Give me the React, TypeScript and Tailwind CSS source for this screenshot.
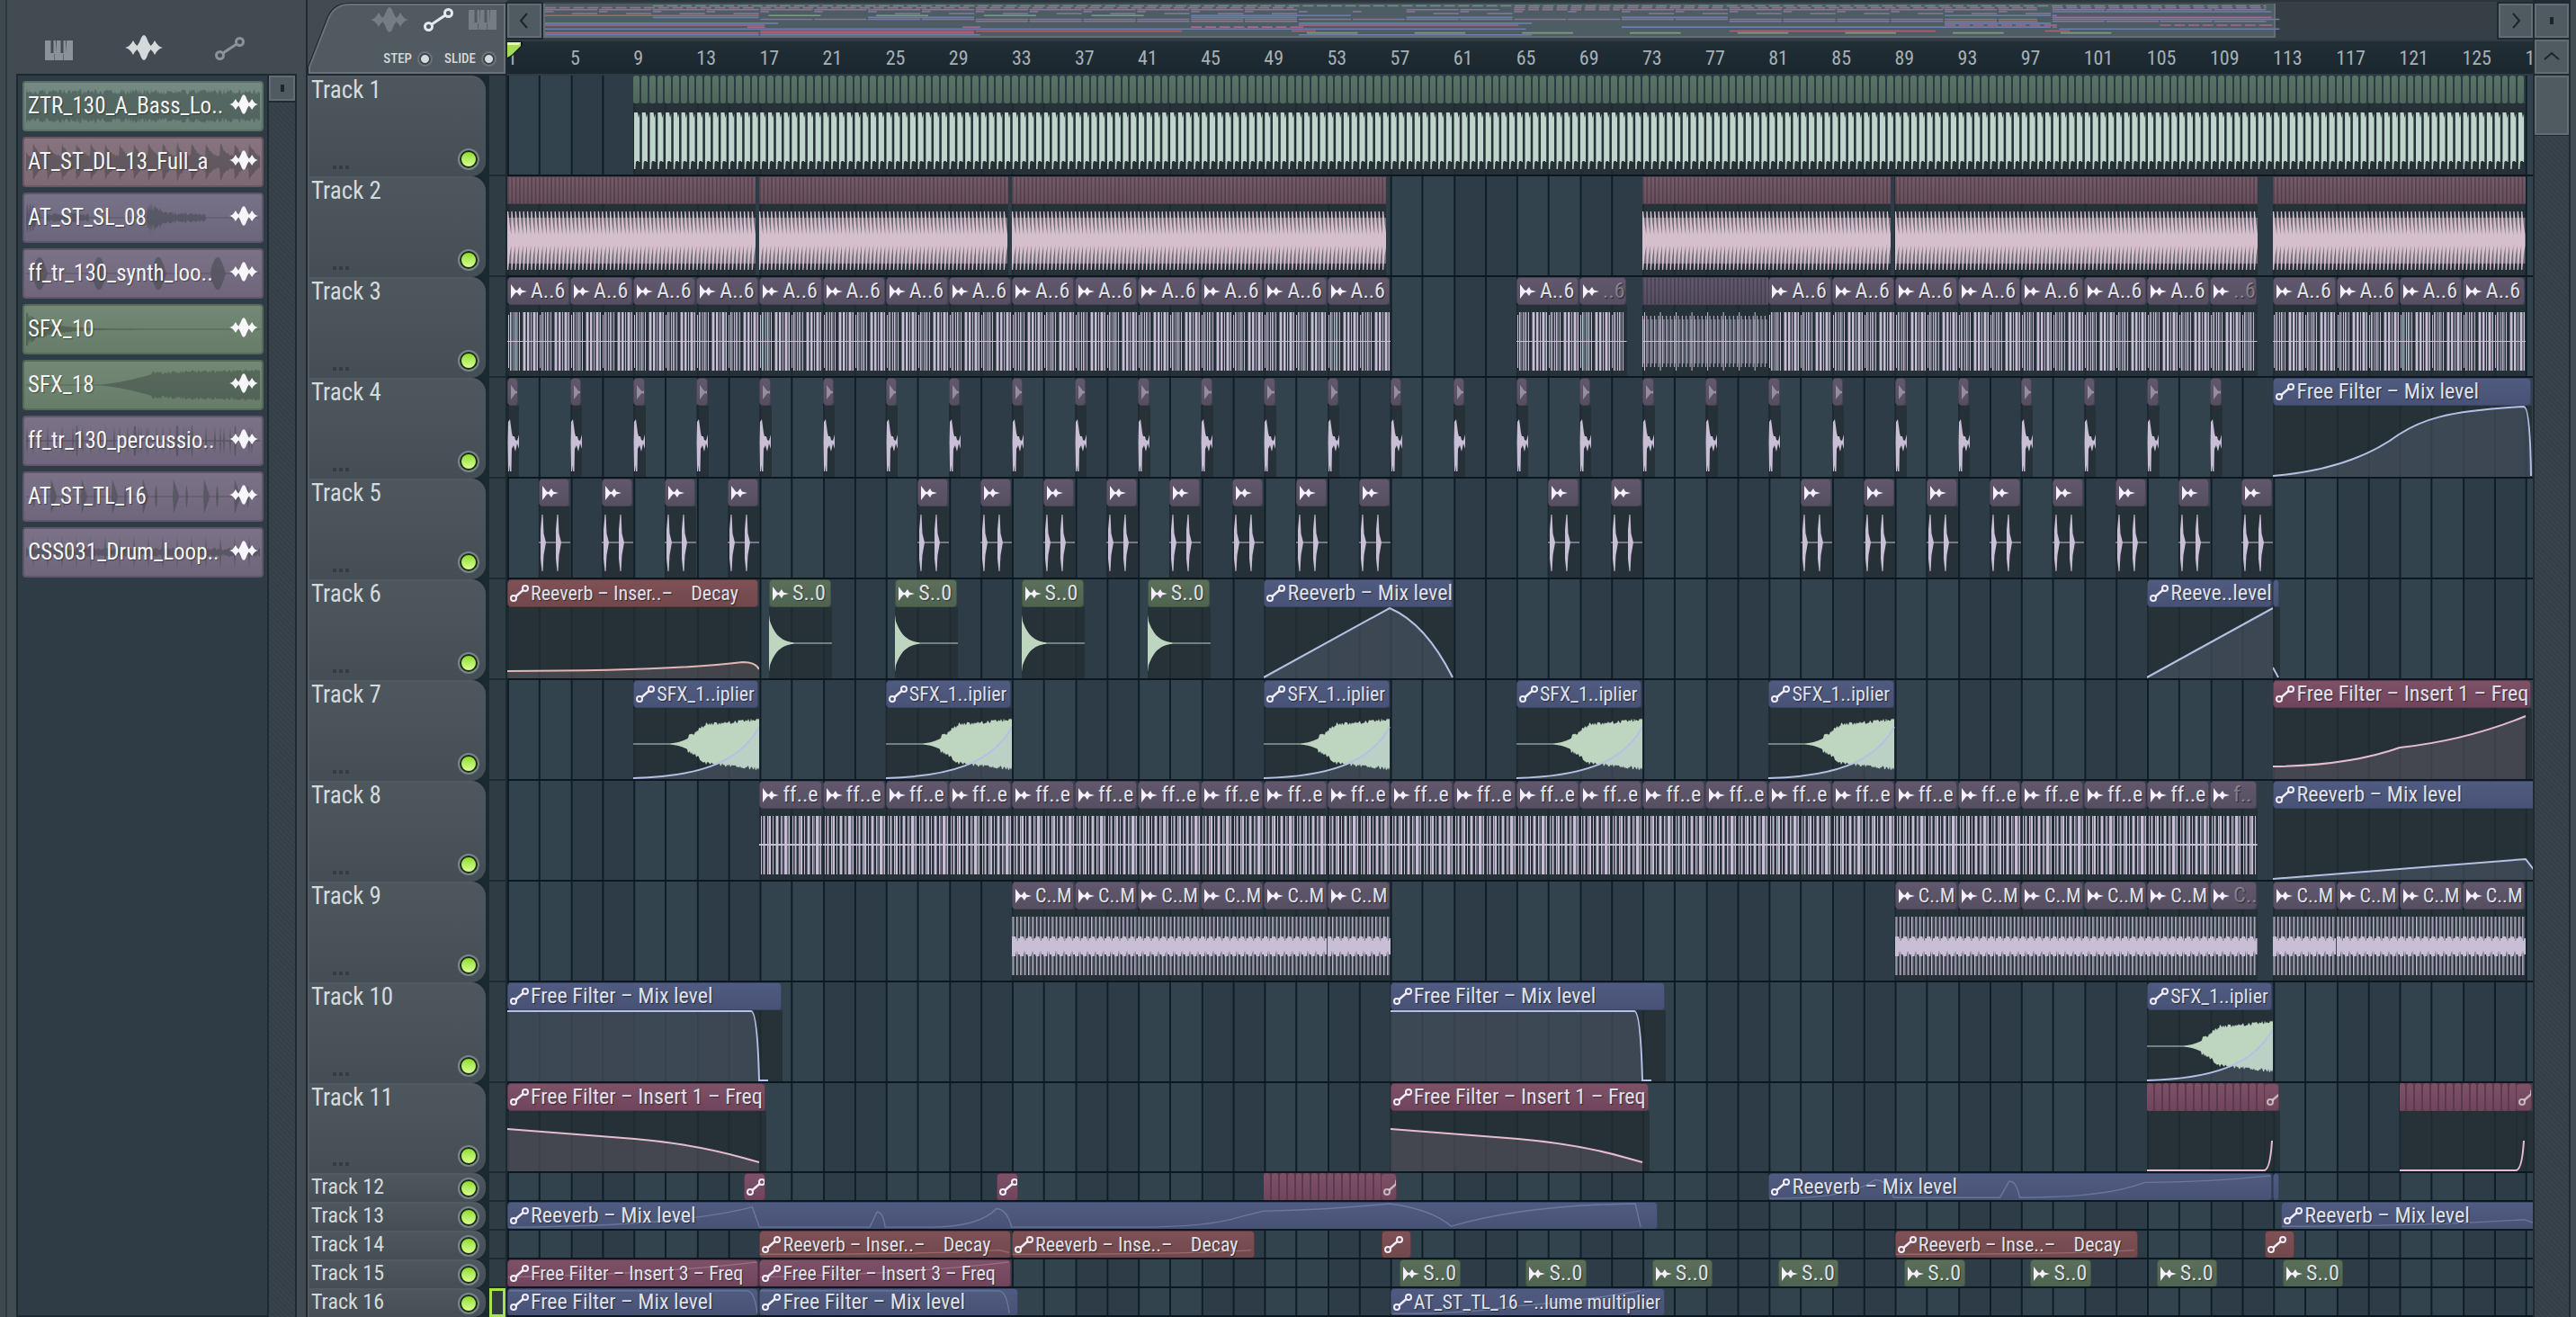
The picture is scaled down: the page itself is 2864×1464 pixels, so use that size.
import React from "react";

const VIEW_BARS = 128.46;
const BAR = 17.53;
const pct = (bars: number) => `${(bars / VIEW_BARS) * 100}%`;

type Tone = "sage" | "green" | "rose" | "pink" | "red" | "purple" | "blue";
type Wave = "bass" | "drums" | "synth" | "stutter" | "shot" | "claps" | "impact" | "riser" | "perc" | "loop";

type Clip = {
  start: number;
  end: number;
  tone: Tone;
  label?: string;
  icon?: "audio" | "auto" | "none";
  dim?: boolean;
  wave?: Wave;
  curve?: string;
  closeAt?: number;
  slices?: number;
};

type Track = { name: string; clips: Clip[]; height: string; body: number };

const HEAD: Record<Tone, string> = {
  sage: "from-[#5a7367] to-[#4f665b] border-[#3f5449]",
  green: "from-[#5b6f5b] to-[#4f6450] border-[#435643]",
  rose: "from-[#755b67] to-[#68505b] border-[#51404b]",
  pink: "from-[#7d5168] to-[#70455b] border-[#5c394b]",
  red: "from-[#7e5156] to-[#71484b] border-[#5c3a3e]",
  purple: "from-[#61586d] to-[#564e61] border-[#4a4256]",
  blue: "from-[#505b81] to-[#485275] border-[#3b4463]",
};

const INK: Record<Tone, string> = {
  sage: "#bfd4ca",
  green: "#bed5c0",
  rose: "#d5bfcd",
  pink: "#e6bccf",
  red: "#e3b6b6",
  purple: "#c8bfd7",
  blue: "#b6c0e4",
};

const MAP_INK: Record<Tone, string> = {
  sage: "#6f9187",
  green: "#7d9b80",
  rose: "#8d7488",
  pink: "#a8698a",
  red: "#a8666c",
  purple: "#85779a",
  blue: "#6d7db0",
};

/* ---------- arrangement ---------- */

const every = (from: number, to: number, step: number, make: (bar: number) => Clip): Clip[] => {
  const out: Clip[] = [];
  for (let b = from; b < to; b += step) out.push(make(b));
  return out;
};

const loops = (from: number, to: number, label: string, wave: Wave) =>
  every(from, to, 4, (b) => ({ start: b, end: b + 4, tone: "purple", label, wave, icon: "audio" }));

const drums = (start: number, end: number): Clip => ({
  start, end, tone: "rose", wave: "drums", icon: "none", slices: Math.round((end - start) * 4),
});

const auto = (start: number, end: number, tone: Tone, label: string, curve?: string, closeAt?: number): Clip => ({
  start, end, tone, label, curve, closeAt, icon: "auto",
});

const riser = (b: number): Clip => ({
  start: b, end: b + 8, tone: "blue", label: "SFX_1..iplier", wave: "riser", icon: "auto", curve: "M0 78 C70 76 118 62 140 21", closeAt: 140,
});

const claps = (b: number): Clip => ({ start: b, end: b + 2, tone: "purple", wave: "claps", icon: "audio" });
const impact = (b: number): Clip => ({ start: b, end: b + 4, tone: "green", label: "S..0", wave: "impact", icon: "audio" });
const hit = (b: number): Clip => ({ start: b, end: b + 3.9, tone: "green", label: "S..0", icon: "audio" });

const FILTER_MIX = "M0 1 H271 Q278 1 280 78 H290";
const FILTER_FREQ = "M0 20 L142 31 Q210 37 262 52 L280 57";

const TRACKS: Track[] = [
  {
    name: "Track 1", height: "h-28", body: 79,
    clips: [{ start: 9, end: 129, tone: "sage", wave: "bass", icon: "none", slices: 240 }],
  },
  {
    name: "Track 2", height: "h-28", body: 79,
    clips: [drums(1, 16.75), drums(17, 32.75), drums(33, 56.75), drums(73, 88.75), drums(89, 112), drums(113, 129)],
  },
  {
    name: "Track 3", height: "h-28", body: 79,
    clips: [
      ...loops(1, 57, "A..6", "synth"),
      { start: 65, end: 69, tone: "purple", label: "A..6", wave: "synth", icon: "audio" },
      { start: 69, end: 72, tone: "purple", label: "..6", dim: true, wave: "synth", icon: "audio" },
      { start: 73, end: 81, tone: "purple", wave: "stutter", icon: "none", slices: 32 },
      ...loops(81, 109, "A..6", "synth"),
      { start: 109, end: 112, tone: "purple", label: "..6", dim: true, wave: "synth", icon: "audio" },
      ...loops(113, 129, "A..6", "synth"),
    ],
  },
  {
    name: "Track 4", height: "h-28", body: 79,
    clips: [
      ...every(1, 110, 4, (b) => ({ start: b, end: b + 0.76, tone: "purple", dim: true, wave: "shot", icon: "audio" })),
      auto(113, 129.4, "blue", "Free Filter – Mix level", "M0 78 C60 73 105 58 140 32 C165 16 190 6 279 1 Q286 1 287 78", 287),
    ],
  },
  {
    name: "Track 5", height: "h-28", body: 79,
    clips: [...every(3, 16, 4, claps), ...every(27, 56, 4, claps), claps(67), claps(71), ...every(83, 112, 4, claps)],
  },
  {
    name: "Track 6", height: "h-28", body: 79,
    clips: [
      auto(1, 17, "red", "Reeverb – Inser..–    Decay", "M0 71 Q180 71 262 61 Q276 61 280 69", 280),
      impact(17.6), impact(25.6), impact(33.6), impact(41.6),
      auto(49, 61, "blue", "Reeverb – Mix level", "M0 78 L140 1 Q180 18 210 78", 210),
      auto(105, 113, "blue", "Reeve..level", "M0 78 L140 1", 140),
      { start: 113, end: 113.45, tone: "blue", icon: "none", curve: "M0 67 L6 78" },
    ],
  },
  {
    name: "Track 7", height: "h-28", body: 79,
    clips: [
      riser(9), riser(25), riser(49), riser(65), riser(81),
      auto(113, 129.4, "pink", "Free Filter – Insert 1 – Freq", "M0 65 Q85 64 141 44 Q215 36 281 9", 281),
    ],
  },
  {
    name: "Track 8", height: "h-28", body: 79,
    clips: [
      ...loops(17, 109, "ff..e", "perc"),
      { start: 109, end: 112, tone: "purple", label: "f..", dim: true, wave: "perc", icon: "audio" },
      auto(113, 130, "blue", "Reeverb – Mix level", "M0 78 L281 56 L298 78", 298),
    ],
  },
  {
    name: "Track 9", height: "h-28", body: 79,
    clips: [
      ...loops(33, 57, "C..M", "loop"),
      ...loops(89, 109, "C..M", "loop"),
      { start: 109, end: 112, tone: "purple", label: "C..", dim: true, wave: "loop", icon: "audio" },
      ...loops(113, 129, "C..M", "loop"),
    ],
  },
  {
    name: "Track 10", height: "h-28", body: 79,
    clips: [
      auto(1, 18.45, "blue", "Free Filter – Mix level", FILTER_MIX, 280),
      auto(57, 74.45, "blue", "Free Filter – Mix level", FILTER_MIX, 280),
      riser(105),
    ],
  },
  {
    name: "Track 11", height: "h-25", body: 67,
    clips: [
      auto(1, 17.45, "pink", "Free Filter – Insert 1 – Freq", FILTER_FREQ, 280),
      auto(57, 73.45, "pink", "Free Filter – Insert 1 – Freq", FILTER_FREQ, 280),
      { start: 105, end: 112.5, tone: "pink", icon: "none", slices: 15, curve: "M0 66 H132" },
      { start: 112.4, end: 113.45, tone: "pink", icon: "auto", dim: true, curve: "M0 66 Q7 66 9 33" },
      { start: 121, end: 128.5, tone: "pink", icon: "none", slices: 15, curve: "M0 66 H132" },
      { start: 128.4, end: 129.45, tone: "pink", icon: "auto", dim: true, curve: "M0 66 Q7 66 9 33" },
    ],
  },
  {
    name: "Track 12", height: "h-8", body: 0,
    clips: [
      auto(16.03, 17.45, "pink", ""), auto(32.03, 33.45, "pink", ""),
      { start: 49, end: 56.5, tone: "pink", icon: "none", slices: 15 },
      { start: 56.4, end: 57.45, tone: "pink", icon: "auto", dim: true },
      auto(81, 113, "blue", "Reeverb – Mix level", "M0 29 Q90 30 118 7 Q133 7 139 28 H258 L268 9 Q276 7 280 28 Q370 28 412 13 L420 10 Q490 10 561 2"),
      { start: 113, end: 113.45, tone: "blue", icon: "none" },
    ],
  },
  {
    name: "Track 13", height: "h-8", body: 0,
    clips: [
      auto(1, 74, "blue", "Reeverb – Mix level", "M0 29 Q190 28 272 5 L280 29 H403 L411 11 Q418 11 420 29 H470 Q525 29 544 7 Q556 8 561 29 H700 Q780 29 815 17 L841 10 Q920 8 982 1 Q1030 8 1051 28 Q1130 3 1256 1 L1262 29"),
      auto(113.5, 130, "blue", "Reeverb – Mix level", "M0 28 Q160 28 272 20 L289 26"),
    ],
  },
  {
    name: "Track 14", height: "h-8", body: 0,
    clips: [
      auto(17, 33, "red", "Reeverb – Inser..–    Decay", "M0 27 Q200 27 268 22 L280 25"),
      auto(33, 48.45, "red", "Reeverb – Inse..–    Decay", "M0 27 Q200 27 268 22"),
      auto(56.45, 58.4, "red", ""),
      auto(89, 104.45, "red", "Reeverb – Inse..–    Decay", "M0 27 Q200 27 268 22"),
      auto(112.45, 114.4, "red", ""),
    ],
  },
  {
    name: "Track 15", height: "h-8", body: 0,
    clips: [
      auto(1, 17, "pink", "Free Filter – Insert 3 – Freq", "M0 20 Q170 16 280 2"),
      auto(17, 33, "pink", "Free Filter – Insert 3 – Freq", "M0 20 Q170 16 280 2"),
      ...every(57.6, 114, 8, hit),
    ],
  },
  {
    name: "Track 16", height: "h-8", body: 0,
    clips: [
      auto(1, 17, "blue", "Free Filter – Mix level", "M0 2 H268 Q277 2 280 29"),
      auto(17, 33.45, "blue", "Free Filter – Mix level", "M0 2 H268 Q277 2 280 29"),
      auto(57, 74.45, "blue", "AT_ST_TL_16 –..lume multiplier", "M0 29 Q80 30 140 20 Q200 16 280 2"),
    ],
  },
];

const TIGHT = /SFX_1|Inse|multiplier|C\.\.M/;
const isTight = (label: string) => TIGHT.test(label) && !label.includes("Insert 1");

/* ---------- wave shapes ---------- */

const noise = (seed: number) => {
  let s = seed * 9301 + 49297;
  return () => {
    s = (s * 1103515245 + 12345) % 2147483648;
    return s / 2147483648;
  };
};

const repeat = (width: number, step: number, draw: (x: number) => string) => {
  let d = "";
  const count = Math.round(width / step);
  for (let i = 0; i < count; i++) d += draw(i * step);
  return d;
};

const bars = (width: number, period: number, spec: [number, number, number?][]) =>
  repeat(width, period, (x) =>
    spec
      .filter(([o, w]) => x + o + w <= width + 0.5)
      .map(([o, w, inset = 0]) => `M${(x + o).toFixed(2)} ${8 + inset}h${w}V${73 - inset}h${-w}Z`)
      .join(""),
  );

const riserShape = () => {
  const r = noise(7);
  const top: string[] = [];
  const bottom: string[] = [];
  for (let x = 0; x <= 140; x++) {
    let a = 0.5;
    if (x > 38) a = 0.5 + 19 * Math.pow(Math.min(1, (x - 38) / 42), 2);
    if (x > 80) a = 19.5 + ((x - 80) / 60) * 6;
    const sway = x > 60 ? 4 : 0;
    top.push(`${x} ${(40 - a - r() * sway).toFixed(1)}`);
    bottom.unshift(`${x} ${(40 + a + r() * sway).toFixed(1)}`);
  }
  return `M${top.join("L")}L${bottom.join("L")}Z`;
};

const impactShape = () => {
  const top: string[] = [];
  const bottom: string[] = [];
  for (let x = 0; x <= 70; x++) {
    const a = x === 0 ? 32 : Math.max(0.5, 28 * Math.exp(-x / 9) - 0.7);
    top.push(`${x} ${(40 - a).toFixed(1)}`);
    bottom.unshift(`${x} ${(40 + a).toFixed(1)}`);
  }
  return `M${top.join("L")}L${bottom.join("L")}Z`;
};

const RISER = riserShape();
const IMPACT = impactShape();
const Q = BAR / 4;

const soft = (wave: Wave, w: number): string => {
  switch (wave) {
    case "drums": return `M0 15H${w}V66H0Z`;
    case "synth": return bars(w, BAR * 2, [[3, 3], [9, 3], [17, 4], [22, 3], [28, 5]]);
    case "stutter": return bars(w, Q, [[1, 2, 8]]);
    case "perc": return bars(w, BAR * 2, [[4, 3], [9, 4], [18, 4], [24, 3], [28, 6]]);
    case "loop": return bars(w, Q, [[1, 2]]);
    default: return "";
  }
};

const solid = (wave: Wave, w: number): string => {
  switch (wave) {
    case "bass":
      return repeat(w, BAR / 2, (x) => `M${(x + 1).toFixed(2)} 10h4l1 6l1 -4h0.2v53h-1.2v-1h-2l-1 1l-0.6 8h-1.4Z`);
    case "drums":
      return repeat(w, Q, (x) => `M${x.toFixed(2)} 8h1.2l1.4 14l1.78 12v12l-1.78 11l-1.4 16h-1.2Z`);
    case "synth":
      return bars(w, BAR * 2, [[1, 1, 3], [3, 1], [7, 1], [9, 1], [13, 1], [18, 2], [22, 2], [26, 1], [29, 2], [33, 1]]) + `M0 40h${w}v1h${-w}Z`;
    case "stutter":
      return bars(w, Q, [[0, 1, 4]]) + bars(w, Q * 4, [[2, 1]]) + `M0 40h${w}v1h${-w}Z`;
    case "perc":
      return bars(w, BAR * 2, [[2, 1], [5, 1], [9, 1], [11, 2], [15, 1], [19, 2], [24, 1], [28, 3], [33, 1]]) + `M0 39h${w}v2h${-w}Z`;
    case "loop":
      return (
        bars(w, Q, [[0.5, 1]]) +
        repeat(w, BAR / 2, (x) => `M${x.toFixed(2)} 30h4l2 8l1 -6h1.8v18h-2l-1.5 -7l-1.3 9h-4Z`) +
        `M0 35h${w}v10h${-w}Z`
      );
    case "shot":
      return "M0.5 40L1 18L3 15L5 30L6 34L8 34L9 38L11 39L13 32V48L11 42L9 51L7 44L5 48L4.5 73H3L2.5 66L2 73H1Z";
    case "claps":
      return [2, 19].map((x) => `M${x} 40V26L${x + 1.5} 9H${x + 2.5}L${x + 3.5} 30L${x + 6} 40L${x + 3.5} 54L${x + 2.5} 72H${x + 1.5}L${x} 58Z`).join("") + `M0 39.5h${w}v1h${-w}Z`;
    case "impact": return IMPACT;
    case "riser": return RISER;
  }
};

/* ---------- icons ---------- */

const AutoIcon = ({ className }: { className?: string }) => (
  <svg viewBox="0 0 33 26" className={className} fill="none" stroke="currentColor" strokeWidth="3" aria-hidden="true">
    <circle cx="5.5" cy="20.5" r="4" />
    <circle cx="27.5" cy="5.5" r="4" />
    <path d="M9 18L24 8" />
  </svg>
);

const ClipAutoIcon = () => (
  <svg viewBox="0 0 21 19" className="h-[19px] w-[21px] shrink-0" fill="none" stroke="currentColor" strokeWidth="2" aria-hidden="true">
    <circle cx="4" cy="15" r="3" />
    <circle cx="17" cy="4" r="3" />
    <path d="M6.5 13L14.5 6" strokeWidth="2.4" />
  </svg>
);

const ClipAudioIcon = () => (
  <svg viewBox="0 0 18 16" className="h-4 w-[18px] shrink-0" fill="currentColor" aria-hidden="true">
    <path d="M0 0L5 6.5L7 7L10 3L12 6.5L18 8L12 9.5L10 13L7 9L5 9.5L0 16Z" />
  </svg>
);

const WaveIcon = ({ className }: { className?: string }) => (
  <svg viewBox="0 0 42 28" className={className} fill="currentColor" aria-hidden="true">
    <path d="M0 14Q5 13.5 9 6Q11 10 13.5 12Q16 9 18 3Q21 -3 24 3Q26 9 28.5 12Q31 10 33 6Q37 13.5 42 14Q37 14.5 33 22Q31 18 28.5 16Q26 19 24 25Q21 31 18 25Q16 19 13.5 16Q11 18 9 22Q5 14.5 0 14Z" />
  </svg>
);

const PianoIcon = ({ className }: { className?: string }) => (
  <svg viewBox="0 0 31 22" className={className} fill="currentColor" aria-hidden="true">
    <path d="M0 0H6.5V14H9.5V0H12L13 14V0H17.5V14H20.5V0H23L24 14V0H31V22H0Z" />
    <path d="M10.5 15V22M20.5 15V22" stroke="#424b51" strokeWidth="0.6" />
  </svg>
);

/* ---------- browser ---------- */

type Sample = { name: string; color: string; shape: (x: number, r: () => number) => number };

const kick = (x: number, period: number, decay: number) => Math.exp(-((x % period) / decay));

const SAMPLES: Sample[] = [
  { name: "ZTR_130_A_Bass_Lo..", color: "from-[#748a82] to-[#698077] border-[#5a7067]", shape: (_x, r) => 13 + r() * 7 },
  { name: "AT_ST_DL_13_Full_a", color: "from-[#88747f] to-[#7d6973] border-[#6c5662]", shape: (x, r) => 4 + 16 * kick(x + 8, 16, 6) + r() * 3 },
  { name: "AT_ST_SL_08", color: "from-[#787289] to-[#6c667d] border-[#5b566c]", shape: (x, r) => (x < 16 ? r() * 18 : x > 20 && x < 70 ? 2 + r() * 4 : x > 134 && x < 152 ? 6 + 14 * r() : x >= 152 && x < 200 ? 2 + 5 * r() : 0.5) },
  { name: "ff_tr_130_synth_loo..", color: "from-[#7c7288] to-[#70667c] border-[#5f566c]", shape: (x) => { const p = (x + 58) % 66; return p < 16 ? 19 * Math.sin(((p + 2) / 18) * Math.PI) : 0.5; } },
  { name: "SFX_10", color: "from-[#748975] to-[#687d69] border-[#566b57]", shape: (x, r) => (x < 3 ? 19 : 18 * Math.exp(-x / 26) * (0.6 + 0.5 * r()) + 0.5) },
  { name: "SFX_18", color: "from-[#748975] to-[#687d69] border-[#566b57]", shape: (x, r) => (x < 80 ? 0.5 : x < 140 ? 12 * Math.pow((x - 80) / 60, 1.5) + 0.5 : 12 + ((x - 140) / 120) * 3 + r() * 4) },
  { name: "ff_tr_130_percussio..", color: "from-[#7c7288] to-[#70667c] border-[#5f566c]", shape: (x, r) => (x % 16 === 8 ? 18 : r() > 0.88 ? 17 : 0.8) },
  { name: "AT_ST_TL_16", color: "from-[#7c7288] to-[#70667c] border-[#5f566c]", shape: (x) => { const p = (x + 6) % 34; return p < 6 ? 19 * (1 - p / 6) + 1 : p > 13 && p < 16 ? 12 : 0.6; } },
  { name: "CSS031_Drum_Loop..", color: "from-[#7c7288] to-[#70667c] border-[#5f566c]", shape: (x, r) => (x % 16 === 8 ? 19 : 2 + r() * 4) },
];

const sampleShape = (s: Sample, seed: number) => {
  const r = noise(seed + 3);
  const top: string[] = [];
  const bottom: string[] = [];
  for (let x = 0; x <= 260; x++) {
    const a = s.shape(x, r);
    top.push(`${x} ${(27 - a).toFixed(1)}`);
    bottom.unshift(`${x} ${(27 + a).toFixed(1)}`);
  }
  return `M${top.join("L")}L${bottom.join("L")}Z`;
};

const HATCH = "bg-[repeating-linear-gradient(45deg,#353f48_0px,#353f48_2px,#39434b_2px,#39434b_4px)]";

function Browser() {
  return (
    <aside className="flex w-[340px] shrink-0 flex-col border-l-[6px] border-[#3d474e] bg-[#424b51]">
      <nav className="flex h-[82px] items-end border-l-2 border-[#2c373f] pb-[15px] text-[#8c9398]">
        <button aria-label="Patterns" className="ml-[42px]"><PianoIcon className="h-[22px] w-[31px]" /></button>
        <button aria-label="Audio" className="mx-[58px] text-[#d4d9dc]"><WaveIcon className="h-7 w-[42px]" /></button>
        <button aria-label="Automation"><AutoIcon className="h-[26px] w-[33px]" /></button>
      </nav>
      <div className="flex flex-1 border-l-2 border-[#2c373f] pl-[10px]">
        <div className="flex flex-1 border-2 border-r-0 border-[#1e2a32] bg-[#303c45] pt-[6px] pl-[5px]">
          <ul className="flex flex-1 flex-col gap-[6px] pr-1">
            {SAMPLES.map((s, i) => (
              <li key={s.name} className="h-14">
                <button className={`relative flex h-full w-full items-center rounded-[4px] border-2 bg-linear-to-b pl-1 text-left text-[25px] text-[#f3f5f6] ${s.color}`}>
                  <svg viewBox="0 0 260 54" preserveAspectRatio="none" className="absolute inset-0 h-full w-full px-[2px]" aria-hidden="true">
                    <path d={sampleShape(s, i)} fill="#2f3a3a" fillOpacity="0.4" />
                  </svg>
                  <span className="relative flex-1 whitespace-nowrap [text-shadow:1px_1px_1px_rgba(0,0,0,0.4)]">{s.name}</span>
                  <span className="relative mr-1 shrink-0 pb-1 text-[#f7f6fb]"><WaveIcon className="h-6 w-8" /></span>
                </button>
              </li>
            ))}
          </ul>
        </div>
        <div className={`flex w-[33px] flex-col border-x-2 border-t-2 border-[#1e2a32] ${HATCH}`}>
          <button aria-label="Scroll position" className="flex h-7 items-center justify-center border-2 border-[#636c73] bg-[#505a61] shadow-[0_2px_0_#1e2a32]">
            <span className="h-2 w-1 bg-[#1b252c]" />
          </button>
        </div>
        <div className="w-[10px]" />
      </div>
    </aside>
  );
}

/* ---------- playlist header ---------- */

function CornerPanel() {
  return (
    <div className="relative h-[84px] w-[222px] shrink-0">
      <svg viewBox="0 0 222 84" className="absolute inset-0 h-full w-full" aria-hidden="true">
        <path d="M0 82V74L22 18Q29 3 46 3H222V84H0Z" fill="#1f2a32" />
        <path d="M2 81V75L24 19Q31 5 46 5H219V81Z" fill="#505a60" stroke="#687278" strokeWidth="2" />
      </svg>
      <div className="relative flex h-full flex-col items-end justify-between pt-2 pr-3 pb-[10px]">
        <div className="flex items-center gap-[17px] text-[#747d82]">
          <button aria-label="Pick audio clips"><WaveIcon className="h-7 w-[42px]" /></button>
          <button aria-label="Pick automation clips" className="text-[#e6e9eb]"><AutoIcon className="h-[26px] w-[33px]" /></button>
          <button aria-label="Pick patterns"><PianoIcon className="h-[22px] w-[31px]" /></button>
        </div>
        <div className="flex gap-[13px] text-[15px] leading-[18px] font-medium text-[#d3d8db]">
          {["STEP", "SLIDE"].map((name) => (
            <label key={name} className="flex items-center gap-[6px]">
              {name}
              <input type="checkbox" className="size-[17px] appearance-none rounded-full border-2 border-[#6b747a] bg-[radial-gradient(circle,#d5dadd_0px,#d5dadd_4px,#3b454c_5px)]" />
            </label>
          ))}
        </div>
      </div>
    </div>
  );
}

const arrow = "flex items-center justify-center border-2 border-[#636c73] bg-[#505a61]";

const Chevron = ({ d }: { d: string }) => (
  <svg viewBox="0 0 18 18" className="size-[18px]" fill="none" stroke="#1b252c" strokeWidth="2" aria-hidden="true">
    <path d={d} />
  </svg>
);

function Overview() {
  return (
    <div className="flex h-11 border-t-2 border-[#2b353c] bg-[#373f46]">
      <button aria-label="Scroll left" className={`mt-[2px] mr-[2px] h-[38px] w-[38px] shrink-0 outline-2 outline-[#1f2a32] ${arrow}`}><Chevron d="M12 1L5 9L12 17" /></button>
      <div className="mt-[2px] flex-1">
        <div className="h-[38px] w-[88.6%] border-2 border-t-0 border-[#636d73] bg-[#4e5c63]">
          <svg viewBox="0 0 128.46 36" preserveAspectRatio="none" className="h-full w-full overflow-visible" aria-hidden="true">
            {TRACKS.flatMap((t, row) =>
              t.clips.map((c, i) => (
                <line
                  key={`${row}-${i}`}
                  x1={c.start - 1}
                  x2={c.end - 1.12}
                  y1={2.5 + row * 2.15}
                  y2={2.5 + row * 2.15}
                  stroke={MAP_INK[c.tone]}
                  strokeWidth="1.6"
                  strokeDasharray={c.slices ? "0.8 0.25" : undefined}
                />
              )),
            )}
          </svg>
        </div>
      </div>
      <button aria-label="Scroll right" className={`mt-[2px] h-[38px] w-[38px] shrink-0 outline-2 outline-[#1f2a32] ${arrow}`}><Chevron d="M6 1L13 9L6 17" /></button>
    </div>
  );
}

function Ruler() {
  const marks = Array.from({ length: 33 }, (_, i) => 1 + i * 4);
  return (
    <div className="relative flex h-10 overflow-hidden border-y-2 border-[#2f3b43] bg-linear-to-b from-[#212e35] to-[#1b272f] text-[22px] leading-[38px] text-[#a6b0b5]">
      {marks.map((m) => (
        <span key={m} className="shrink-0 whitespace-nowrap" style={{ width: pct(4) }}>{m}</span>
      ))}
      <svg viewBox="0 0 18 20" className="absolute top-0 left-0 h-5 w-[18px]" aria-hidden="true">
        <path d="M0 0H16Q17 0 17 4L7 15L0 20Z" fill="#0d161b" />
        <path d="M0 1H15V5L5 15L0 18Z" fill="#a4dd55" />
        <path d="M0 1H15L13 4H0Z" fill="#e3f7a8" />
      </svg>
    </div>
  );
}

/* ---------- track rows ---------- */

function TrackHeader({ track }: { track: Track }) {
  const tall = track.body > 0;
  return (
    <div className="flex w-[222px] shrink-0 bg-[#1b2931]">
      <div className={`flex w-[198px] justify-between border-t-2 border-l-2 border-t-[#515b61] border-l-[#515b61] bg-linear-to-b from-[#4d575d] to-[#454e55] pl-[2px] ${tall ? "rounded-r-[16px]" : "rounded-r-[14px]"}`}>
        <div className="flex flex-col justify-between">
          <h2 className={tall ? "text-[27px] leading-[28px] text-[#d5dadc]" : "text-[24px] leading-[26px] text-[#d5dadc]"}>{track.name}</h2>
          {tall && (
            <button aria-label={`${track.name} options`} className="mb-2 ml-6 flex gap-[3px]">
              <span className="size-1 bg-[#343d44]" /><span className="size-1 bg-[#343d44]" /><span className="size-1 bg-[#343d44]" />
            </button>
          )}
        </div>
        <input
          type="checkbox"
          defaultChecked
          aria-label={`Enable ${track.name}`}
          className={`mr-[9px] size-5 appearance-none self-end rounded-full border-2 border-[#1a2c14] bg-linear-to-b from-[#8fdc2e] to-[#d9ff8c] outline-2 outline-[#7b858a] ${tall ? "mb-[9px]" : "mb-[5px]"}`}
        />
      </div>
      <div className={`ml-1 w-[18px] border-b-2 border-[#1e2a32] bg-[#303c44] ${track.name === "Track 16" ? "outline-3 -outline-offset-3 outline-[#a9e24e]" : ""}`} />
    </div>
  );
}

function SliceHead({ clip }: { clip: Clip }) {
  const count = clip.slices ?? 0;
  if (clip.wave === "drums" || clip.wave === "stutter") {
    return (
      <div className={`h-[31px] shrink-0 border-y bg-linear-to-b ${HEAD[clip.tone]}`}>
        <div
          className="h-full bg-[linear-gradient(to_right,rgba(40,30,45,0.35)_42%,transparent_42%)]"
          style={{ backgroundSize: `${100 / count}% 100%` }}
        />
      </div>
    );
  }
  return (
    <div className={`flex h-[31px] shrink-0 ${clip.wave === "bass" ? "bg-[#2c3b43]" : "bg-[#5b3a4c]"}`}>
      {Array.from({ length: count }, (_, i) => (
        <span key={i} className={`mr-[2px] min-w-0 flex-1 rounded-[3px] bg-linear-to-b ${HEAD[clip.tone]}`} />
      ))}
    </div>
  );
}

function ClipView({ clip, body }: { clip: Clip; body: number }) {
  const w = (clip.end - clip.start) * BAR;
  const ink = INK[clip.tone];
  const waveInk = clip.wave === "riser" ? INK.green : ink;
  const stroked = clip.curve && (
    <path d={clip.curve} fill="none" stroke={ink} strokeWidth={body ? 2 : 1.5} strokeOpacity={body ? 1 : 0.3} />
  );
  return (
    <div className="absolute inset-y-0 flex flex-col" style={{ left: pct(clip.start - 1), width: pct(clip.end - clip.start) }}>
      {clip.slices ? (
        <SliceHead clip={clip} />
      ) : (
        <div className={`relative mr-px flex h-[31px] shrink-0 items-center overflow-hidden rounded-[4px] border bg-linear-to-b leading-[29px] whitespace-pre ${clip.label && isTight(clip.label) ? "text-[22px]" : "text-[24px]"} ${HEAD[clip.tone]} ${clip.dim ? "text-white/35" : "text-[#dfe1ea]"}`}>
          {!body && clip.curve && (
            <svg viewBox={`0 0 ${w} 31`} preserveAspectRatio="none" className="absolute inset-0 h-full w-full" aria-hidden="true">{stroked}</svg>
          )}
          {clip.icon === "auto" && (
            <span className={`relative shrink-0 pl-[2px] ${clip.dim ? "text-white/60" : "text-[#f1eefa]"}`}><ClipAutoIcon /></span>
          )}
          {clip.icon === "audio" && (
            <span className={`relative shrink-0 pl-[3px] ${clip.dim && !clip.label ? "" : "text-[#f5effb]"}`}><ClipAudioIcon /></span>
          )}
          {clip.label && (
            <span className={`relative [text-shadow:1px_1px_1px_rgba(0,0,0,0.5)] ${clip.icon === "auto" ? "pl-[2px]" : "pl-1"}`}>{clip.label}</span>
          )}
        </div>
      )}
      {body > 0 && (
        <div className="min-h-0 flex-1 bg-[#232d33]/80">
          <svg viewBox={`0 0 ${w} ${body}`} preserveAspectRatio="none" className="h-full w-full" aria-hidden="true">
            {clip.wave && (
              <>
                <path d={soft(clip.wave, w)} fill={waveInk} fillOpacity="0.45" />
                <path d={solid(clip.wave, w)} fill={waveInk} />
              </>
            )}
            {clip.curve && clip.closeAt && (
              <path d={`${clip.curve.replace(" H290", "")} L${clip.closeAt} ${body} L0 ${body}Z`} fill={ink} fillOpacity="0.16" />
            )}
            {stroked}
          </svg>
        </div>
      )}
    </div>
  );
}

const GRID_IMAGE =
  "bg-[linear-gradient(to_right,#0e1d26_2px,#33434d_2px,#33434d_25%,#0e1d26_25%,#0e1d26_calc(25%+2px),#33434d_calc(25%+2px),#33434d_50%,#0e1d26_50%,#0e1d26_calc(50%+2px),#2d3c47_calc(50%+2px),#2d3c47_75%,#0e1d26_75%,#0e1d26_calc(75%+2px),#2d3c47_calc(75%+2px))]";

function TrackRow({ track }: { track: Track }) {
  return (
    <section className={`flex shrink-0 ${track.height}`} aria-label={track.name}>
      <TrackHeader track={track} />
      <div className={`relative flex-1 overflow-hidden border-b-2 border-[#0c1820] bg-repeat-x ${GRID_IMAGE}`} style={{ backgroundSize: `${pct(8)} 100%` }}>
        {track.clips.map((c, i) => (
          <ClipView key={i} clip={c} body={track.body} />
        ))}
      </div>
    </section>
  );
}

export default function App() {
  return (
    <main className="flex h-screen overflow-hidden bg-[#424b51] font-['Roboto_Condensed','Liberation_Sans',sans-serif]">
      <Browser />
      <div className="flex min-w-0 flex-1 flex-col border-l-2 border-[#1f2a32]">
        <header className="flex shrink-0 bg-[#424b51]">
          <CornerPanel />
          <div className="flex min-w-0 flex-1 flex-col">
            <Overview />
            <Ruler />
          </div>
        </header>
        {TRACKS.map((t) => (
          <TrackRow key={t.name} track={t} />
        ))}
      </div>
      <div className="flex w-12 shrink-0 flex-col border-r-[6px] border-[#434d53] bg-[#1f2a32] pt-1 pr-[2px] pl-[2px]">
        <button aria-label="Zoom" className={`h-[38px] shrink-0 ${arrow}`}><span className="h-2 w-1 bg-[#1b252c]" /></button>
        <button aria-label="Scroll up" className={`mt-[2px] h-[38px] shrink-0 ${arrow}`}><Chevron d="M1 12L9 5L17 12" /></button>
        <div className={`mt-[2px] flex-1 ${HATCH}`}>
          <button aria-label="Vertical scroll thumb" className={`h-[66px] w-full shadow-[0_1px_0_#1f2a32] ${arrow}`} />
        </div>
      </div>
    </main>
  );
}
